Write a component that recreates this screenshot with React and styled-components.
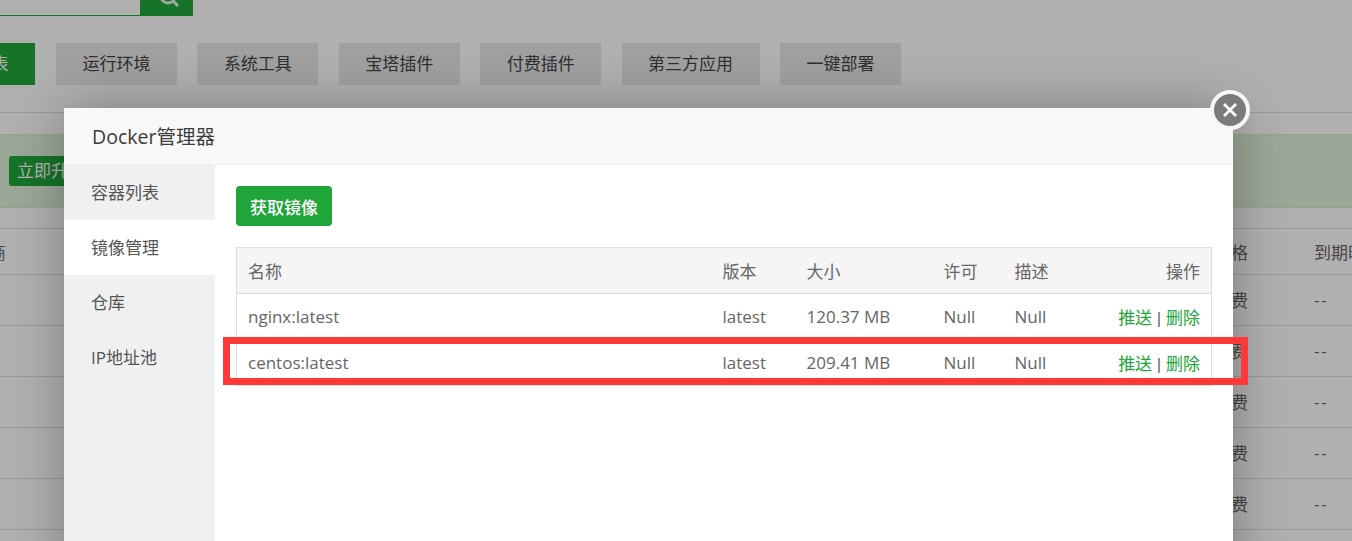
import React from 'react';
import styled, { createGlobalStyle } from 'styled-components';

const GlobalStyle = createGlobalStyle`
    html, body {
        margin: 0;
        padding: 0;
        height: 541px;
        overflow: hidden;
        background: #fff;
    }
    body, button, table {
        font-family: "Open Sans", "Noto Sans CJK SC", sans-serif;
    }
    * {
        box-sizing: border-box;
    }
`;

const Page = styled.div`
    position: relative;
    width: 1352px;
    height: 541px;
    overflow: hidden;
    background: #fcfcfc;
`;

const SearchRow = styled.div`
    display: flex;
    height: 16px;
    margin-left: -7px;
`;

const SearchInput = styled.div`
    width: 147px;
    border-bottom: 1px solid #20a53a;
`;

const SearchButton = styled.div`
    display: flex;
    justify-content: center;
    align-items: flex-end;
    width: 53px;
    background: #20a53a;
    overflow: hidden;
`;

const SearchIcon = styled.svg`
    display: block;
    flex-shrink: 0;
    width: 24px;
    height: 24px;
    margin: 0 0 7px 4px;
    fill: none;
    stroke: #e4efe6;
    stroke-width: 3;
`;

const TabRow = styled.div`
    display: flex;
    gap: 20.4px;
    margin: 27px 0 0 -86px;
`;

const Tab = styled.div`
    flex-shrink: 0;
    width: ${p => p.$width}px;
    height: 42px;
    line-height: 42px;
    text-align: center;
    font-size: 17px;
    color: ${p => (p.$active ? '#fff' : '#444')};
    background: ${p => (p.$active ? '#20a53a' : '#e6e6e6')};

    &:first-child {
        margin-right: 0.6px;
    }
`;

const BannerRule = styled.div`
    height: 1px;
    margin-top: 27px;
    background: #ddd;
`;

const Banner = styled.div`
    display: flex;
    align-items: center;
    height: 74px;
    margin-top: 21px;
    padding-left: 9px;
    background: #dff0d8;
    border-top: 1px solid #d6e9c6;
    border-bottom: 1px solid #d6e9c6;
`;

const UpgradeButton = styled.div`
    width: 100px;
    height: 30px;
    padding-left: 8px;
    line-height: 30px;
    font-size: 17px;
    color: #fff;
    background: #20a53a;
    border-radius: 3px;
`;

const BackHead = styled.div`
    display: flex;
    align-items: center;
    height: 47px;
    margin-top: 20px;
    border-top: 1px solid #ddd;
    border-bottom: 1px solid #ddd;
    font-size: 17px;
    color: #666;
    white-space: nowrap;
`;

const BackRow = styled.div`
    display: flex;
    align-items: center;
    height: 51px;
    padding-bottom: 2px;
    border-bottom: 1px solid #ddd;
    font-size: 17px;
    color: #666;
    white-space: nowrap;
`;

const LeftCell = styled.span`
    flex-shrink: 0;
    width: ${p => 1214 + (p.$offset || 0)}px;
    margin-left: ${p => -(p.$offset || 0)}px;
`;

const PriceCell = styled.span`
    flex-shrink: 0;
    width: 100px;
`;

const DateCell = styled.span`
    letter-spacing: 1.5px;
`;

const Overlay = styled.div`
    position: absolute;
    inset: 0;
    background: rgba(0, 0, 0, 0.3);
`;

const Modal = styled.div`
    position: absolute;
    top: 108px;
    left: 64px;
    width: 1169px;
    height: 640px;
    background: #fff;
    box-shadow: 1px 1px 50px rgba(0, 0, 0, 0.3);
`;

const ModalTitle = styled.div`
    height: 57px;
    padding-left: 28px;
    line-height: 58px;
    font-size: 19.5px;
    color: #3c3c3c;
    background: #f8f8f8;
    border-bottom: 1px solid #eee;
`;

const ModalBody = styled.div`
    display: flex;
    align-items: stretch;
    height: 583px;
`;

const SideNav = styled.div`
    flex-shrink: 0;
    width: 151px;
    background: #f0f0f0;
`;

const SideItem = styled.div`
    height: 55px;
    padding-left: 27px;
    line-height: 55px;
    font-size: 17px;
    color: #555;
    background: ${p => (p.$active ? '#fff' : 'transparent')};
`;

const Content = styled.div`
    flex: 1;
    min-width: 0;
    padding: 21px 21px 0;
`;

const PrimaryButton = styled.button`
    display: block;
    width: 96px;
    height: 40px;
    padding: 0;
    border: none;
    border-radius: 4px;
    font-size: 17px;
    font-weight: 500;
    color: #fff;
    background: #20a53a;
`;

const Table = styled.table`
    width: 975px;
    margin-top: 21px;
    border-collapse: collapse;
    table-layout: fixed;
    font-size: 17px;
    color: #666;
`;

const Th = styled.th`
    height: 46px;
    padding: 0 11px;
    font-weight: 400;
    text-align: ${p => p.$align || 'left'};
    background: #f5f5f5;
    border-top: 1px solid #ddd;
    border-bottom: 1px solid #ddd;
    &:first-child {
        border-left: 1px solid #ddd;
    }
    &:last-child {
        border-right: 1px solid #ddd;
    }
`;

const Td = styled.td`
    height: 46px;
    padding: 0 11px;
    text-align: ${p => p.$align || 'left'};
    border-bottom: 1px solid #ddd;
    &:first-child {
        border-left: 1px solid #ddd;
    }
    &:last-child {
        border-right: 1px solid #ddd;
    }
`;

const ActionLink = styled.a`
    color: #20a53a;
`;

const Separator = styled.span`
    font-family: "Liberation Sans", sans-serif;
    white-space: pre;
`;

const CloseButton = styled.div`
    position: absolute;
    top: 90px;
    left: 1210px;
    display: flex;
    justify-content: center;
    align-items: center;
    width: 40px;
    height: 40px;
    border: 4px solid #f6f6f6;
    border-radius: 50%;
    background: #7b7b7b;
`;

const CloseIcon = styled.svg`
    display: block;
    width: 16px;
    height: 16px;
    stroke: #fff;
    stroke-width: 2.6;
`;

const Highlight = styled.div`
    position: absolute;
    top: 337px;
    left: 223px;
    width: 1025px;
    height: 48px;
    border: 7px solid #ff3838;
`;

const tabs = [
    { label: '软件列表', width: 121, active: true },
    { label: '运行环境', width: 121 },
    { label: '系统工具', width: 121 },
    { label: '宝塔插件', width: 121 },
    { label: '付费插件', width: 121 },
    { label: '第三方应用', width: 138 },
    { label: '一键部署', width: 121 },
];

const navItems = ['容器列表', '镜像管理', '仓库', 'IP地址池'];

const images = [
    { name: 'nginx:latest', size: '120.37 MB' },
    { name: 'centos:latest', size: '209.41 MB' },
];

export default function App() {
    return (
        <Page>
            <GlobalStyle />
            <SearchRow>
                <SearchInput />
                <SearchButton>
                    <SearchIcon viewBox="0 0 24 24">
                        <circle cx="11" cy="11" r="7" />
                        <line x1="16" y1="16" x2="21" y2="21" />
                    </SearchIcon>
                </SearchButton>
            </SearchRow>
            <TabRow>
                {tabs.map(tab => (
                    <Tab key={tab.label} $width={tab.width} $active={tab.active}>
                        {tab.label}
                    </Tab>
                ))}
            </TabRow>
            <BannerRule />
            <Banner>
                <UpgradeButton>立即升级</UpgradeButton>
            </Banner>
            <BackHead>
                <LeftCell $offset={28}>厂商</LeftCell>
                <PriceCell>价格</PriceCell>
                <span>到期时间</span>
            </BackHead>
            {[0, 1, 2, 3, 4].map(row => (
                <BackRow key={row}>
                    <LeftCell />
                    <PriceCell>免费</PriceCell>
                    <DateCell>--</DateCell>
                </BackRow>
            ))}
            <Overlay />
            <Modal>
                <ModalTitle>Docker管理器</ModalTitle>
                <ModalBody>
                    <SideNav>
                        {navItems.map((item, i) => (
                            <SideItem key={item} $active={i === 1}>
                                {item}
                            </SideItem>
                        ))}
                    </SideNav>
                    <Content>
                        <PrimaryButton>获取镜像</PrimaryButton>
                        <Table>
                            <colgroup>
                                <col width="475" />
                                <col width="84" />
                                <col width="137" />
                                <col width="71" />
                                <col width="71" />
                                <col width="137" />
                            </colgroup>
                            <thead>
                                <tr>
                                    <Th>名称</Th>
                                    <Th>版本</Th>
                                    <Th>大小</Th>
                                    <Th>许可</Th>
                                    <Th>描述</Th>
                                    <Th $align="right">操作</Th>
                                </tr>
                            </thead>
                            <tbody>
                                {images.map(image => (
                                    <tr key={image.name}>
                                        <Td>{image.name}</Td>
                                        <Td>latest</Td>
                                        <Td>{image.size}</Td>
                                        <Td>Null</Td>
                                        <Td>Null</Td>
                                        <Td $align="right">
                                            <ActionLink>推送</ActionLink>
                                            <Separator> | </Separator>
                                            <ActionLink>删除</ActionLink>
                                        </Td>
                                    </tr>
                                ))}
                            </tbody>
                        </Table>
                    </Content>
                </ModalBody>
            </Modal>
            <CloseButton>
                <CloseIcon viewBox="0 0 16 16">
                    <line x1="2" y1="2" x2="14" y2="14" />
                    <line x1="14" y1="2" x2="2" y2="14" />
                </CloseIcon>
            </CloseButton>
            <Highlight />
        </Page>
    );
}
